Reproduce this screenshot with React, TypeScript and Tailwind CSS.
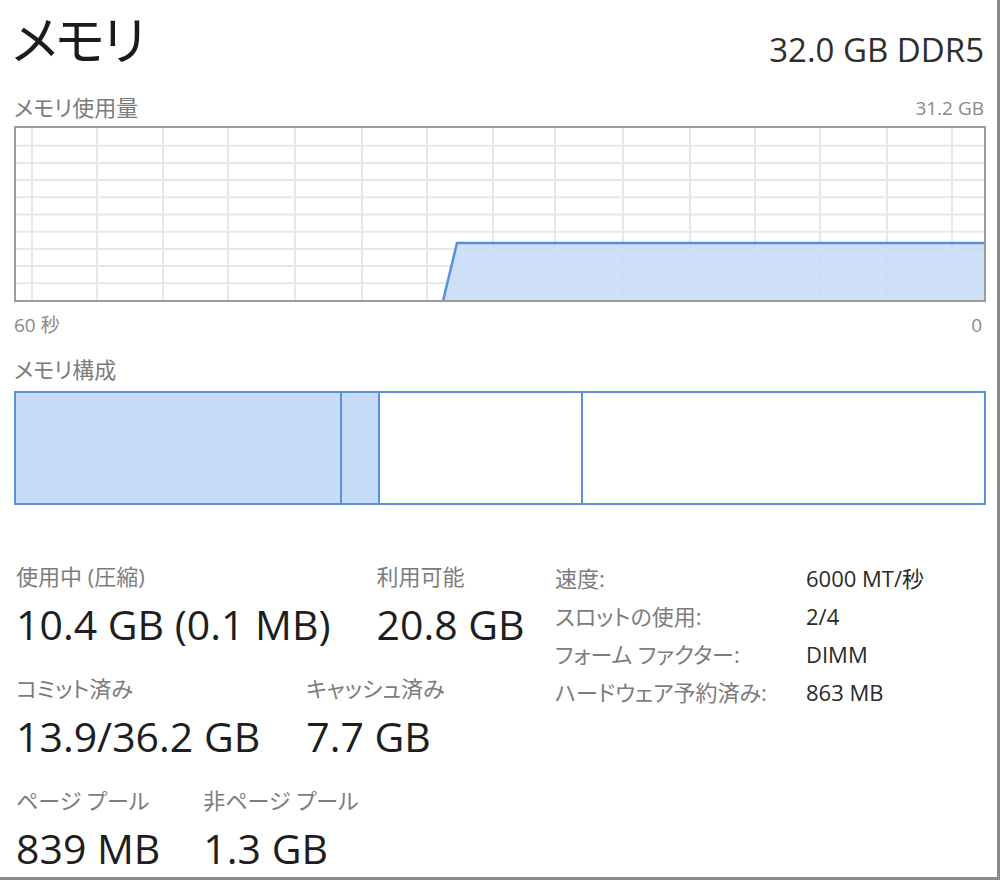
import React from "react";

const font = "font-['Open_Sans','Noto_Sans_CJK_JP',sans-serif] [font-feature-settings:'palt']";

// 60秒の使用量グラフ
const UsageGraph: React.FC = () => {
  const w = 968;
  const h = 172;
  const cols = [16, 81, 147, 212, 279, 346, 411, 477, 539, 607, 674, 739, 804, 871, 936];
  const rows = [1, 2, 3, 4, 5, 6, 7, 8, 9].map((i) => (i * h) / 10 + 0.5);
  return (
    <svg width={w} height={h} className="block">
      {cols.map((x) => (
        <line key={`v${x}`} x1={x} y1={0} x2={x} y2={h} stroke="#e8e8e8" strokeWidth={2} />
      ))}
      {rows.map((y) => (
        <line key={`h${y}`} x1={0} y1={y} x2={w} y2={y} stroke="#e8e8e8" strokeWidth={2} />
      ))}
      <polygon points={`427,${h} 441,115 ${w},115 ${w},${h}`} fill="#c6dbf7" fillOpacity={0.85} />
      <polyline points={`427,${h + 1} 441,115 ${w},115`} fill="none" stroke="#5a8fdc" strokeWidth={2.5} />
    </svg>
  );
};

const Stat: React.FC<{ label: string; value: string }> = ({ label, value }) => (
  <div className="flex flex-col">
    <div className="text-[22px] leading-[28px] text-[#7c7c7c] whitespace-nowrap">{label}</div>
    <div className="text-[41px] leading-[48px] text-[#1e1e1e] whitespace-nowrap mt-[10px]">{value}</div>
  </div>
);

const App: React.FC = () => {
  return (
    <div className={`${font} w-[1000px] h-[880px] bg-white border-r-[3px] border-b-[3px] border-[#8c8c8c] overflow-hidden pl-[14px] pr-[11px]`}>
      <div className="flex items-start justify-between h-[76px]">
        <div className="text-[52px] leading-[80px] tracking-[-2px] text-[#1b1b1b] -ml-[2px]">メモリ</div>
        <div className="text-[33px] leading-[40px] text-[#2e2e2e] mt-[30px] mr-[2px]">32.0 GB DDR5</div>
      </div>

      <div className="flex items-end justify-between h-[50px] pb-[5px]">
        <div className="text-[22px] leading-[28px] text-[#7c7c7c]">メモリ使用量</div>
        <div className="text-[19px] leading-[26px] text-[#8a8a8a] mr-[2px]">31.2 GB</div>
      </div>

      <div className="border-2 border-[#9c9c9c] w-[972px]">
        <UsageGraph />
      </div>

      <div className="flex justify-between text-[19px] leading-[26px] text-[#8a8a8a] mt-[10px]">
        <span>60 秒</span>
        <span className="mr-[4px]">0</span>
      </div>

      <div className="text-[22px] leading-[28px] text-[#7c7c7c] mt-[17px]">メモリ構成</div>

      <div className="flex w-[972px] h-[114px] border-2 border-[#5a8fdc] mt-[8px]">
        <div className="w-[326px] bg-[#c6dbf7] border-r-2 border-[#5a8fdc]" />
        <div className="w-[38px] bg-[#c6dbf7] border-r-2 border-[#5a8fdc]" />
        <div className="w-[203px] border-r-2 border-[#5a8fdc]" />
        <div className="flex-1" />
      </div>

      <div className="flex mt-[57px]">
        <div className="w-[541px] flex flex-col gap-[26px] pl-[2px]">
          <div className="flex gap-[46px]">
            <Stat label="使用中 (圧縮)" value="10.4 GB (0.1 MB)" />
            <Stat label="利用可能" value="20.8 GB" />
          </div>
          <div className="flex gap-[46px]">
            <Stat label="コミット済み" value="13.9/36.2 GB" />
            <Stat label="キャッシュ済み" value="7.7 GB" />
          </div>
          <div className="flex gap-[43px]">
            <Stat label="ページ プール" value="839 MB" />
            <Stat label="非ページ プール" value="1.3 GB" />
          </div>
        </div>

        <div className="grid grid-cols-[251px_auto] gap-y-[10px] text-[22px] leading-[28px] content-start mt-[2px]">
          <div className="text-[#7c7c7c]">速度:</div>
          <div className="text-[#2a2a2a]">6000 MT/秒</div>
          <div className="text-[#7c7c7c]">スロットの使用:</div>
          <div className="text-[#2a2a2a]">2/4</div>
          <div className="text-[#7c7c7c]">フォーム ファクター:</div>
          <div className="text-[#2a2a2a]">DIMM</div>
          <div className="text-[#7c7c7c]">ハードウェア予約済み:</div>
          <div className="text-[#2a2a2a]">863 MB</div>
        </div>
      </div>
    </div>
  );
};

export default App;
